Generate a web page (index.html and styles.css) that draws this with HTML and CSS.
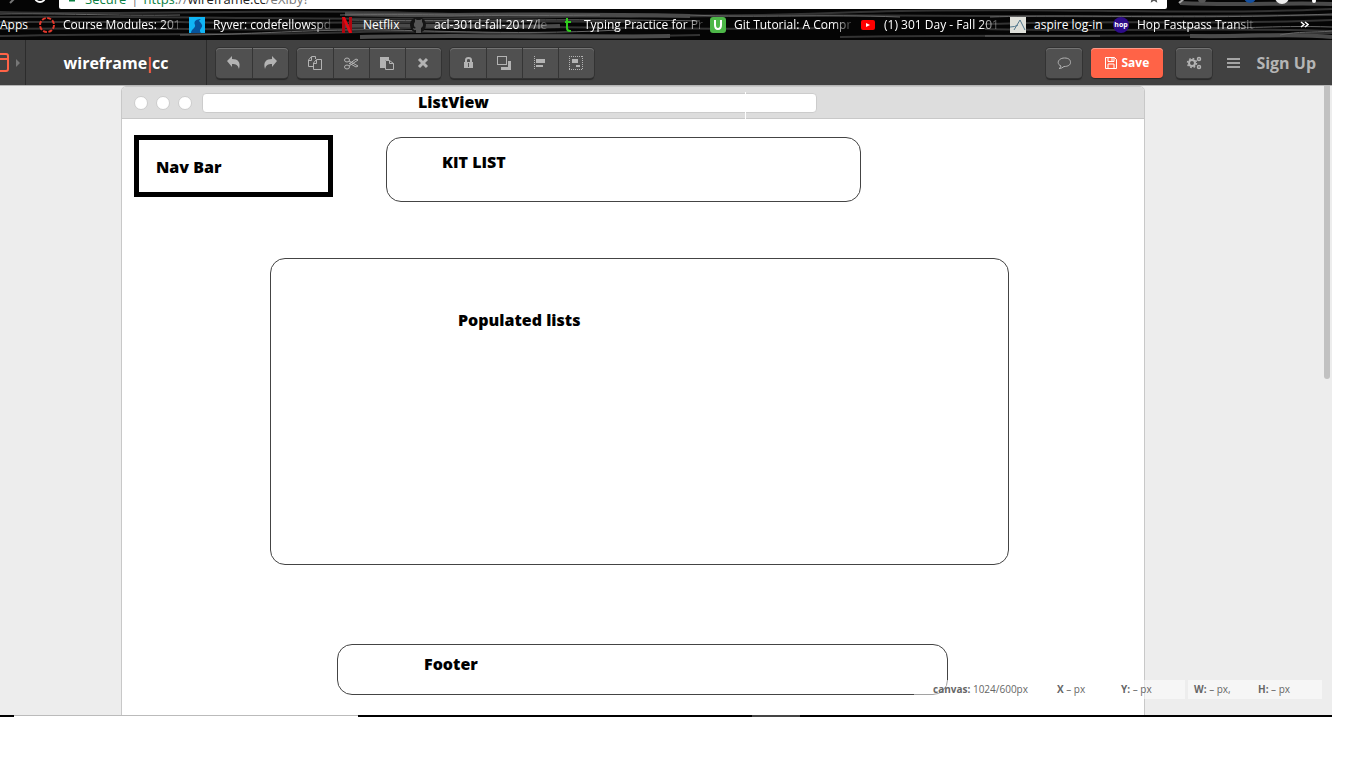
FILE: index.html
```html
<!DOCTYPE html>
<html lang="en">
<head>
<meta charset="utf-8">
<title>wireframe.cc</title>
<link rel="stylesheet" href="styles.css">
</head>
<body>
<div class="window">
  <header class="browser">
    <svg class="streaks" viewBox="0 0 1332 40" preserveAspectRatio="none" fill="none" aria-hidden="true">
      <g stroke="#333" stroke-width="2">
        <path d="M0 12C150 16 260 8 420 13S700 18 860 12S1180 16 1332 9"/>
        <path d="M0 17C200 15 300 22 560 17S1000 19 1332 15"/>
        <path d="M0 22H180C300 25 420 20 640 22M985 24C1100 20 1220 25 1332 20"/>
        <path d="M0 29C160 27 270 32 420 28S650 31 830 28M985 29C1090 32 1240 27 1332 31"/>
        <path d="M0 36C150 33 280 35 360 32S590 39 700 35M840 37C990 34 1150 38 1332 33"/>
      </g>
      <g stroke="#4a4a4a" stroke-width="4">
        <path d="M345 14C440 17 520 12 690 16M345 26C420 24 480 28 560 26M360 37C460 34 540 38 670 36M1180 3C1240 6 1290 2 1332 4M1190 36C1260 37 1290 33 1332 37"/>
      </g>
      <g stroke="#666">
        <path d="M180 35C240 35 280 31 350 30S500 36 620 30"/>
        <path d="M340 15C430 13 450 17 600 15M350 20C450 22 540 18 700 21"/>
        <path d="M990 17C1090 14 1180 20 1332 14M1180 27C1240 30 1270 25 1332 27M1280 35C1300 31 1310 33 1332 31"/>
        <path d="M0 14C60 13 110 16 180 15M690 15C760 18 820 14 900 17M985 36H1100"/>
      </g>
    </svg>
    <div class="address-row">
      <svg class="nav-icons" viewBox="0 0 59 9" fill="none" aria-hidden="true"><path d="M10 3l5-5" stroke="#777" stroke-width="2"/><circle cx="40" cy="-3" r="5" stroke="#fff" stroke-width="2"/></svg>
      <div class="address">
        <svg class="lock" viewBox="0 0 8 8" aria-hidden="true"><path d="M0 0h8v2H0z" fill="#0b8043"/></svg>
        <span class="secure">Secure</span><span class="bar">|</span><span class="url"><span class="secure">https</span>://<b>wireframe.cc</b>/eXlby?</span>
        <svg class="star" viewBox="0 0 12 9" aria-hidden="true"><path d="M1 4l1-4L0-3h12l-2 3 1 4-5-3z" fill="#555"/></svg>
      </div>
      <svg class="extensions" viewBox="0 0 165 9" aria-hidden="true"><path d="M12 3l6-5" stroke="#aaa" stroke-width="2"/><circle cx="35" cy="-1" r="4" fill="#555"/><circle cx="83" cy="-3" r="6" fill="#1450a0"/><circle cx="115" cy="-3" r="7" fill="#eee"/><circle cx="147" cy="1" r="2" fill="#fff"/></svg>
    </div>
    <nav class="bookmarks" aria-label="Bookmarks">
      <a href="#" class="apps">Apps</a>
      <a href="#" class="mark long"><svg viewBox="0 0 16 16" fill="none"><circle cx="8" cy="8" r="7" stroke="#e2382c" stroke-width="2" stroke-dasharray="4 1.5"/></svg><span>Course Modules: 201</span></a>
      <a href="#" class="mark long"><svg viewBox="0 0 16 16"><path fill="#10b5f5" d="M0 0h16v16H0z"/><path fill="#07539b" d="M12 2C8 2 4 4 6 8c1 3-4 4-4 8h10c-3-4 2-5 1-8-1-3-5-4-1-6z"/></svg><span>Ryver: codefellowspd</span></a>
      <a href="#" class="mark netflix"><svg viewBox="0 0 16 16"><path fill="#b1060f" d="M3 0h3v16H3zM10 0h3v16h-3z"/><path fill="#e50914" d="M3 0h3l7 16h-3z"/></svg><span>Netflix</span></a>
      <a href="#" class="mark long"><svg viewBox="0 0 16 16"><circle cx="8" cy="8" r="8" fill="#151515"/><path fill="#555" d="M6 16v-3c-2 .5-3-.5-3-2 2 1 3 0 3 0-2-1-3-4-1-6V2l2 1h3l2-1v3c2 2 1 5-1 6v5z"/></svg><span>acl-301d-fall-2017/le</span></a>
      <a href="#" class="mark long"><svg viewBox="0 0 16 16" fill="none"><path d="M7 1v10q0 3 3 3h1M5 5h6" stroke="#2fcb1d" stroke-width="2"/></svg><span>Typing Practice for Pr</span></a>
      <a href="#" class="mark long"><svg viewBox="0 0 16 16" fill="none"><rect width="16" height="16" rx="3" fill="#4db748"/><path d="M5 3v5q0 4 3 4t3-4V3" stroke="#fff" stroke-width="2"/></svg><span>Git Tutorial: A Compr</span></a>
      <a href="#" class="mark long"><svg viewBox="0 0 16 16"><rect x="1" y="3" width="14" height="10" rx="2" fill="#f00"/><path d="M6 6v4l4-2z" fill="#fff"/></svg><span>(1) 301 Day - Fall 201</span></a>
      <a href="#" class="mark aspire"><svg viewBox="0 0 16 16" fill="none"><path fill="#dfe0da" d="M0 0h16v16H0z"/><path d="M4 13l6-10 5 10M0 10q5 0 8-2" stroke="#53788e"/></svg><span>aspire log-in</span></a>
      <a href="#" class="mark long"><svg viewBox="0 0 16 16"><circle cx="8" cy="8" r="8" fill="#2d0b88"/><text x="8" y="10" class="hop">hop</text></svg><span>Hop Fastpass Transit</span></a>
      <button class="overflow" aria-label="More bookmarks"><svg viewBox="0 0 9 7" fill="none"><path d="M1 1l3 2.500L1 6M5 1l3 2.500L5 6" stroke="#fff" stroke-width="1.500"/></svg></button>
    </nav>
  </header>

  <div class="toolbar">
    <button class="device" aria-label="Device"><svg viewBox="0 0 20 20" fill="none"><rect x="-8" y="1" width="16" height="17" rx="2" stroke="#ff6347" stroke-width="2"/><path d="M0 6h8" stroke="#ff6347" stroke-width="2"/><path d="M16 6l4 4-4 4z" fill="#777"/></svg></button>
    <a class="logo" href="#">wireframe<span>|</span>cc</a>
    <div class="tools">
      <div class="group">
        <button aria-label="Undo"><svg viewBox="0 0 16 16"><path fill="#b3b3b3" d="M1 6l5-5v3c6 0 9 3 7 10-1-4-3-5-7-5v3z"/></svg></button>
        <button aria-label="Redo"><svg viewBox="0 0 16 16"><path fill="#b3b3b3" d="M15 6l-5-5v3C4 4 1 7 3 14c1-4 3-5 7-5v3z"/></svg></button>
      </div>
      <div class="group">
        <button aria-label="Copy"><svg viewBox="0 0 16 16" fill="none" stroke="#b3b3b3"><path d="M6 11.500H1.500V5l3-3.500H8.500V4M4.500 2v3.500h-3M6.500 14.500V8l3-3.500h5v10zM9.500 5v3.500h-3"/></svg></button>
        <button aria-label="Cut"><svg viewBox="0 0 16 16" fill="none" stroke="#b3b3b3"><ellipse cx="4" cy="5" rx="2.500" ry="2"/><ellipse cx="4" cy="12" rx="2.500" ry="2"/><path d="M6 6l9 5-2 1-7-4M6 11l9-6-2-1-7 5"/></svg></button>
        <button aria-label="Paste"><svg viewBox="0 0 16 16"><path fill="#b3b3b3" d="M1 2h9v3H6v8H1z"/><path fill="#505050" stroke="#b3b3b3" d="M6.500 5.500h4l4 3v6h-8zM10.500 5.500v3h4"/></svg></button>
        <button aria-label="Delete"><svg viewBox="0 0 16 16" fill="none"><path d="M4 4l8 8M12 4l-8 8" stroke="#b3b3b3" stroke-width="3"/></svg></button>
      </div>
      <div class="group">
        <button aria-label="Lock"><svg viewBox="0 0 16 16"><path d="M6 7V5q0-2 2.500-2T11 5v2" fill="none" stroke="#b3b3b3" stroke-width="2"/><rect x="4" y="7" width="9" height="6" fill="#b3b3b3"/><path d="M8.500 8v4" stroke="#555"/></svg></button>
        <button aria-label="Arrange"><svg viewBox="0 0 16 16"><path d="M12 6h3v9H5v-3h7z" fill="#b3b3b3"/><rect x="1.500" y="1.500" width="9" height="8" fill="none" stroke="#b3b3b3"/></svg></button>
        <button aria-label="Align"><svg viewBox="0 0 16 16"><path d="M2.500 1v14" stroke="#b3b3b3" stroke-dasharray="1 1"/><path d="M4 4h9v4H4zM4 10h7v2H4z" fill="#b3b3b3"/></svg></button>
        <button aria-label="Group"><svg viewBox="0 0 16 16"><path d="M1 1.500h14M1 14.500h14M1.500 1v14M14.500 1v14" stroke="#b3b3b3" stroke-dasharray="1 1"/><path d="M4 4h6v4H4zM8 10h4v2H8z" fill="#b3b3b3"/></svg></button>
      </div>
    </div>
    <div class="account">
      <div class="group"><button aria-label="Comments"><svg viewBox="0 0 16 16" fill="none" stroke="#b3b3b3"><path d="M8.500 3C13 3 14.500 5 14.500 7.500S12 11.500 8 11.500q-2 2-5 2 2-1 2-2.500C0 9 2 3 8.500 3z"/></svg></button></div>
      <button class="save"><svg viewBox="0 0 12 12" fill="none" stroke="#fff"><path d="M.5.5h9l2 2v9H.5zM3 .5v4h6v-4M3 11V7h6v4M7 1v3"/></svg>Save</button>
      <div class="group"><button aria-label="Settings"><svg viewBox="0 0 16 16" fill="none" stroke="#b3b3b3"><circle cx="6" cy="8" r="3" stroke-width="2"/><circle cx="6" cy="8" r="4.500" stroke-width="1.500" stroke-dasharray="1.700 1.830"/><circle cx="13" cy="4" r="1.500" stroke-width="1.500"/><circle cx="13" cy="12" r="1.500" stroke-width="1.500"/></svg></button></div>
      <button class="menu" aria-label="Menu"><svg viewBox="0 0 13 10"><path d="M0 1h13M0 5h13M0 9h13" stroke="#a5a5a5" stroke-width="2"/></svg></button>
      <a class="signup" href="#">Sign Up</a>
    </div>
  </div>

  <main class="workspace">
    <section class="canvas">
      <div class="frame-head"><i></i><i></i><i></i><div class="frame-address"></div></div>
      <div class="shape tick"></div>
      <div class="shape nav-box"></div>
      <div class="shape round kit-box"></div>
      <div class="shape round list-box"></div>
      <div class="shape round footer-box"></div>
      <div class="label title-label">ListView</div>
      <div class="label nav-label">Nav Bar</div>
      <div class="label kit-label">KIT LIST</div>
      <div class="label list-label">Populated lists</div>
      <div class="label footer-label">Footer</div>
    </section>
    <div class="scrollbar"></div>
    <div class="status">
      <div class="status-part position"><span class="size"><b>canvas:</b> 1024/600px</span><span><b>X</b> – px</span><span><b>Y:</b> – px</span></div>
      <div class="status-part extent"><span><b>W:</b> – px,</span><span><b>H:</b> – px</span></div>
    </div>
  </main>
  <div class="taskbar"><i class="light"></i><i class="dim"></i></div>
</div>
</body>
</html>
```

FILE: styles.css
```css
* { box-sizing: border-box; }
body { margin: 0; height: 100vh; padding: 0 34px 51px 0; background: #fff; font-family: "Open Sans", "Noto Sans", sans-serif; overflow: hidden; }
button { border: 0; padding: 0; background: none; font: inherit; color: inherit; }
a { color: inherit; text-decoration: none; }
svg { display: block; flex: none; }
.window { height: 100%; display: flex; flex-direction: column; }

.browser { position: relative; flex: none; background: #050505; overflow: hidden; }
.streaks { position: absolute; inset: 0; width: 100%; height: 100%; }
.address-row { position: relative; display: flex; height: 9px; }
.nav-icons { width: 59px; height: 9px; }
.address { flex: 1; height: 9px; display: flex; align-items: flex-end; overflow: hidden; background: #fff; border-radius: 0 0 2px 2px; padding: 0 7px 3px 9px; font-size: 13px; line-height: 14px; color: #777; }
.address b { font-weight: 400; color: #222; }
.lock { width: 8px; height: 6px; margin-right: 9px; }
.secure { color: #0b8043; }
.bar { margin: 0 5px; }
.star { width: 12px; height: 6px; margin-left: auto; }
.extensions { width: 165px; height: 9px; }
.bookmarks { position: relative; display: flex; align-items: center; height: 31px; font-size: 12px; line-height: 16px; color: #fff; }
.apps { width: 39px; }
.mark { display: flex; gap: 8px; flex: none; }
.mark svg { width: 16px; height: 16px; }
.mark span { white-space: nowrap; }
.long { width: 150px; }
.long span { -webkit-mask-image: linear-gradient(90deg, #000 84%, transparent 104%); mask-image: linear-gradient(90deg, #000 84%, transparent 104%); }
.netflix { width: 71px; }
.aspire { width: 103px; }
.hop { font-size: 7px; font-weight: 700; fill: #fff; text-anchor: middle; }
.overflow { margin-left: auto; margin-right: 23px; }
.overflow svg { width: 9px; height: 7px; }

.toolbar { flex: none; display: flex; align-items: center; height: 45px; background: #414141; color: #b5b5b5; }
.device { width: 26px; height: 45px; border-right: 1px solid #2c2c2c; }
.device svg { width: 20px; height: 20px; }
.logo { width: 181px; height: 45px; border-right: 1px solid #2c2c2c; text-align: center; font-size: 16px; line-height: 46px; font-weight: 700; color: #fff; }
.logo span { color: #ff6347; margin: 0 -2px; }
.tools { display: flex; gap: 9px; padding-left: 9px; }
.group { display: flex; height: 30px; border-radius: 4px; background: #505050; box-shadow: inset 0 1px #747474, 0 0 0 1px #333, 0 2px 1px #292929; }
.group button { width: 36px; display: grid; place-items: center; }
.group button + button { box-shadow: inset 1px 0 #353535; }
.group svg { width: 16px; height: 16px; }
.account { display: flex; align-items: center; margin-left: auto; padding-right: 16px; }
.save { display: flex; align-items: center; justify-content: center; gap: 4px; width: 72px; height: 30px; margin: 0 13px 0 9px; border-radius: 4px; background: #ff6347; color: #fff; font-size: 12px; font-weight: 700; box-shadow: inset 0 1px #ff9a88, 0 1px 1px #292929; }
.save svg { width: 12px; height: 12px; }
.menu { margin: 0 16px 0 15px; }
.menu svg { width: 13px; height: 10px; }
.signup { font-size: 16px; line-height: 20px; font-weight: 700; }

.workspace { position: relative; flex: 1; min-height: 0; overflow: hidden; background: #ededed; border-top: 1px solid #b5b5b5; }
.canvas { position: relative; width: 1024px; height: 700px; margin-left: 121px; border: 1px solid #c8c8c8; border-radius: 5px 5px 0 0; background: #fff; }
.frame-head { display: flex; align-items: center; gap: 8px; height: 32px; padding-left: 12px; background: #ddd; border-bottom: 1px solid #c8c8c8; border-radius: 4px 4px 0 0; }
.frame-head i { width: 14px; height: 14px; border: 1px solid #ccc; border-radius: 50%; background: #fff; }
.frame-address { width: 615px; height: 20px; margin-left: 2px; border: 1px solid #ccc; border-radius: 4px; background: #fff; }
.shape, .label { position: absolute; }
.tick { left: 623px; top: 5px; width: 1px; height: 27px; background: #fff; }
.nav-box { left: 12px; top: 48px; width: 199px; height: 62px; border: 5px solid #000; }
.round { border: 1px solid #444; border-radius: 15px; }
.kit-box { left: 264px; top: 50px; width: 475px; height: 65px; }
.list-box { left: 148px; top: 171px; width: 739px; height: 307px; }
.footer-box { left: 215px; top: 557px; width: 611px; height: 51px; }
.label { font-size: 16px; line-height: 20px; font-weight: 800; color: #000; white-space: nowrap; }
.title-label { left: 296px; top: 5px; }
.nav-label { left: 34px; top: 70px; }
.kit-label { left: 320px; top: 65px; }
.list-label { left: 336px; top: 223px; }
.footer-label { left: 302px; top: 567px; }
.scrollbar { position: absolute; right: 2px; top: 0; width: 6px; height: 293px; background: #c1c1c1; border-radius: 0 0 3px 3px; }
.status { position: absolute; right: 10px; bottom: 16px; display: flex; gap: 3px; font-size: 10px; line-height: 19px; color: #666; }
.status-part { display: flex; background: rgba(255, 255, 255, .5); white-space: nowrap; }
.position { padding-left: 19px; }
.position span { width: 64px; }
.position .size { width: 124px; }
.extent { padding-left: 6px; }
.extent span { width: 64px; }
.taskbar { flex: none; display: flex; height: 2px; background: #000; padding-left: 14px; }
.light { width: 344px; background: #fff; border-top: 1px solid #bbb; }
.dim { width: 48px; margin-left: 394px; background: #444; }
```
